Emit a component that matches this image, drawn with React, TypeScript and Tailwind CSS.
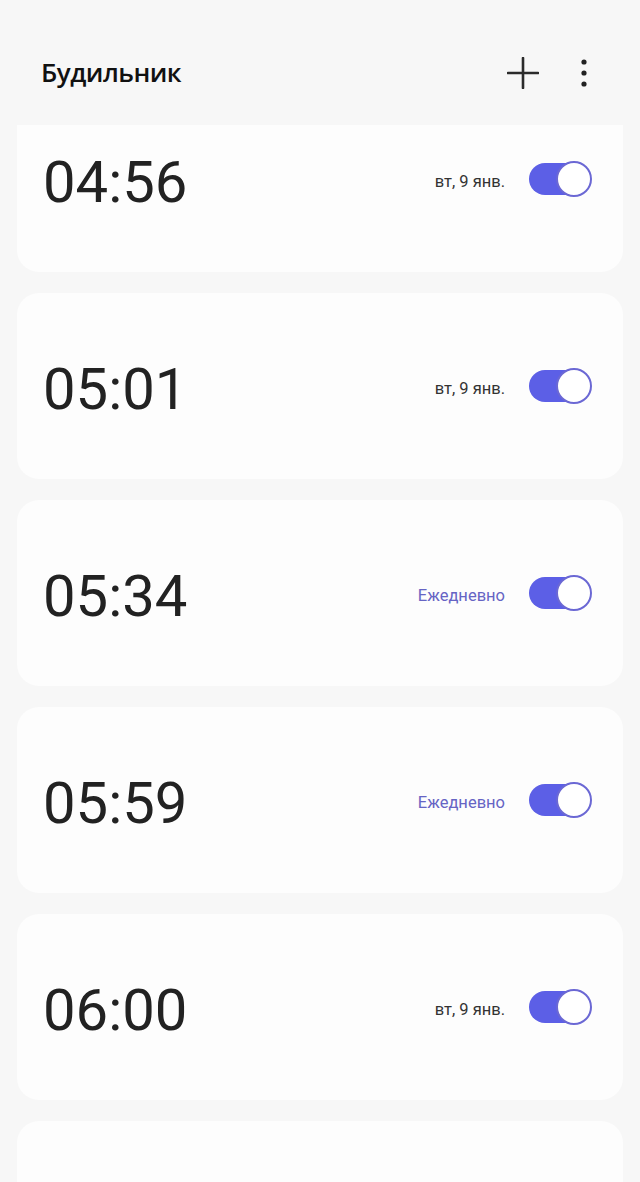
import React from "react";

const ALARMS = [
  { time: "04:56", label: "вт, 9 янв.", daily: false },
  { time: "05:01", label: "вт, 9 янв.", daily: false },
  { time: "05:34", label: "Ежедневно", daily: true },
  { time: "05:59", label: "Ежедневно", daily: true },
  { time: "06:00", label: "вт, 9 янв.", daily: false },
];

function Toggle() {
  return (
    <div className="relative w-[63px] h-[36px] flex items-center mb-[6px]">
      <div className="w-[58px] h-[32px] rounded-full bg-[#5c5fe6]" />
      <div className="absolute right-0 top-0 w-[36px] h-[36px] rounded-full bg-white border-2 border-[#6b68d4]" />
    </div>
  );
}

export default function App() {
  return (
    <div
      className="w-[640px] h-[1182px] bg-[#f7f7f7] flex flex-col overflow-hidden"
      style={{ fontFamily: "Roboto, 'Noto Sans', sans-serif" }}
    >
      {/* Header */}
      <header className="h-[125px] shrink-0 flex items-center pl-[41px] pr-[52px] pt-[20px]">
        <h1 className="flex-1 text-[26px] font-semibold text-[#111] tracking-[-0.5px]" style={{ fontFamily: "'Open Sans', sans-serif" }}>
          Будильник
        </h1>
        <svg width="32" height="32" viewBox="0 0 32 32" className="mr-[41px]">
          <path d="M16 1v30M1 16h30" stroke="#2b2b2b" strokeWidth="2.6" strokeLinecap="round" />
        </svg>
        <svg width="8" height="28" viewBox="0 0 8 28">
          <circle cx="4" cy="3" r="2.6" fill="#222" />
          <circle cx="4" cy="14" r="2.6" fill="#222" />
          <circle cx="4" cy="25" r="2.6" fill="#222" />
        </svg>
      </header>

      {/* List */}
      <div className="flex-1 overflow-hidden px-[17px]">
        <div className="-mt-[39px] flex flex-col gap-[21px]">
          {ALARMS.map((a) => (
            <div key={a.time} className="h-[186px] rounded-[22px] bg-[#fdfdfd] flex items-center pl-[26px] pr-[31px] pt-[6px]">
              <span className="flex-1 text-[58px] font-normal text-[#222] leading-none">
                {a.time}
              </span>
              <span className={`text-[16.5px] mr-[24px] ${a.daily ? "text-[#6664c4]" : "text-[#333]"}`}>
                {a.label}
              </span>
              <Toggle />
            </div>
          ))}
          <div className="h-[186px] rounded-[22px] bg-[#fdfdfd]" />
        </div>
      </div>
    </div>
  );
}
